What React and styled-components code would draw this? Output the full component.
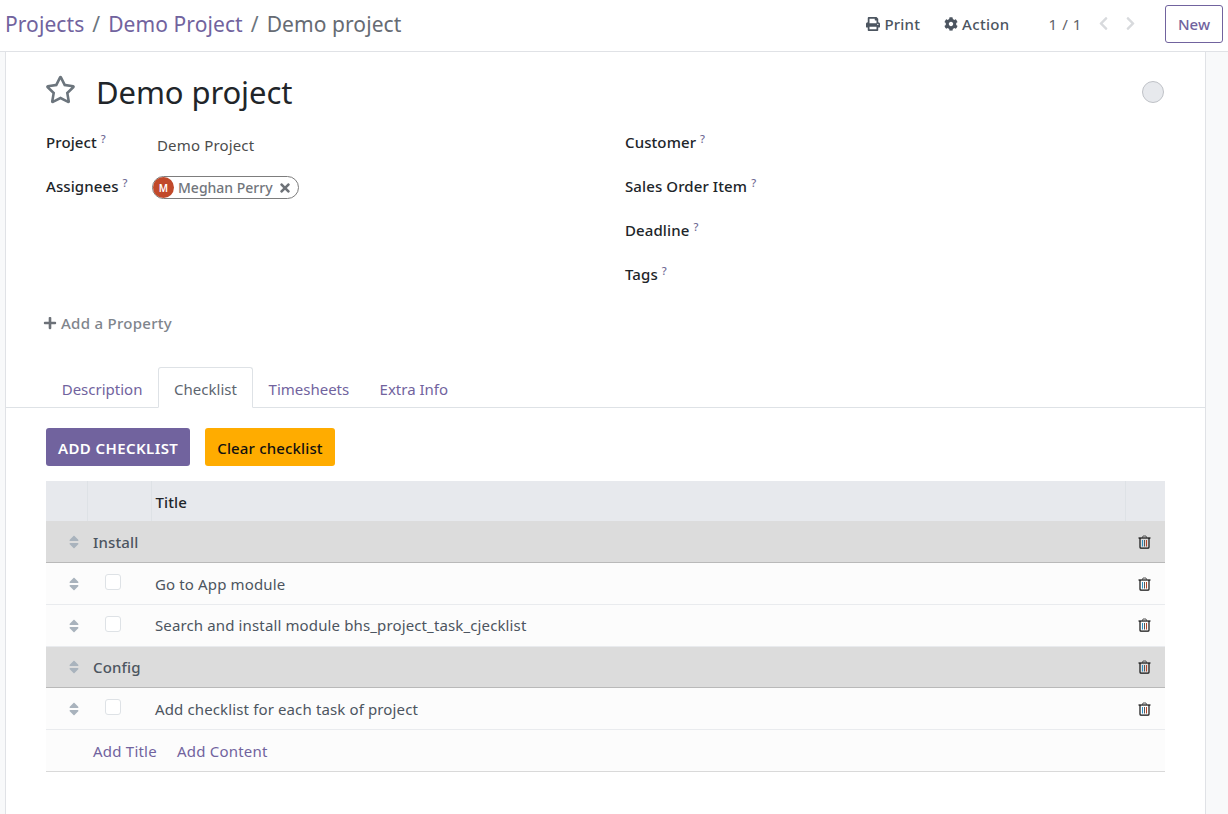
import React from 'react';
import styled, { createGlobalStyle } from 'styled-components';
import { FaPrint, FaCog, FaChevronLeft, FaChevronRight, FaRegStar, FaTimes, FaPlus, FaSort } from 'react-icons/fa';

const GlobalStyle = createGlobalStyle`
  html, body { margin: 0; padding: 0; height: 100%; overflow: hidden; }
  body {
    background: #fff;
    font-family: "Noto Sans", "Open Sans", sans-serif;
    font-size: 15px;
    color: #4c4c4c;
  }
`;

const Page = styled.div`
  width: 1228px;
  height: 814px;
  display: flex;
  flex-direction: column;
  overflow: hidden;
`;

// Top control panel
const ControlPanel = styled.header`
  height: 52px;
  flex: none;
  display: flex;
  align-items: center;
  justify-content: space-between;
  padding: 0 5px 4px 5px;
  box-sizing: border-box;
  border-bottom: 1px solid #e0e2e6;
`;

const Breadcrumb = styled.nav`
  display: flex;
  gap: 8px;
  font-size: 21px;
  letter-spacing: 0.08px;
  color: #6c757d;
`;

const Crumb = styled.span`
  color: ${(props) => (props.$active ? '#666b73' : '#71639e')};
`;

const Actions = styled.div`
  display: flex;
  align-items: center;
`;

const ActionItem = styled.span`
  display: flex;
  align-items: center;
  gap: 4px;
  font-weight: 500;
  letter-spacing: ${(props) => props.$spacing}px;
  color: #4c5560;
  margin-right: ${(props) => props.$gap}px;
  svg { font-size: 14px; }
`;

const Pager = styled.span`
  color: #5f636a;
  margin-right: 14px;
  letter-spacing: 0.6px;
`;

const Arrow = styled.span`
  display: flex;
  color: #d8dadd;
  font-size: 15px;
  margin-right: ${(props) => props.$gap}px;
`;

const NewButton = styled.button`
  width: 58px;
  height: 38px;
  background: #fff;
  border: 1px solid #71639e;
  border-radius: 3px;
  color: #71639e;
  font: 500 15px "Noto Sans", sans-serif;
`;

// Form sheet
const Gutter = styled.div`
  flex: 1;
  display: flex;
  background: #f8f9fa;
`;

const Sheet = styled.main`
  flex: none;
  width: 1201px;
  margin-left: 5px;
  box-sizing: border-box;
  border-left: 1px solid #e0e2e6;
  border-right: 1px solid #e0e2e6;
`;

const Paper = styled.div`
  width: 100%;
  height: 100%;
  background: #fff;
  padding-top: 20px;
  box-sizing: border-box;
`;

const TitleRow = styled.div`
  display: flex;
  align-items: center;
  padding: 0 40px;
  height: 44px;
  position: relative;
`;

const Star = styled.span`
  display: flex;
  font-size: 31px;
  color: #6c757d;
  width: 51px;
  margin-top: -10px;
  margin-left: -1px;
`;

const Title = styled.h1`
  margin: -4px 0 0;
  font-size: 31px;
  font-weight: 400;
  letter-spacing: -0.1px;
  color: #212529;
`;

const StateDot = styled.span`
  position: absolute;
  right: 41px;
  top: 9px;
  width: 20px;
  height: 20px;
  border-radius: 50%;
  background: #e7e9ed;
  border: 1px solid #bfc2c7;
`;

const FormGrid = styled.div`
  display: grid;
  grid-template-columns: 579px 1fr;
  padding: 16px 40px 0;
  height: 178px;
  box-sizing: border-box;
`;

const FieldColumn = styled.div`
  display: flex;
  flex-direction: column;
`;

const Field = styled.div`
  height: 44px;
  display: flex;
  align-items: flex-start;
`;

const Label = styled.label`
  display: block;
  width: ${(props) => props.$width || 'auto'};
  font-weight: 500;
  letter-spacing: 0.1px;
  color: #212529;
  line-height: 20px;
  flex: none;
`;

const Help = styled.sup`
  font-size: 11px;
  font-weight: 500;
  color: #6f6a94;
  margin-left: 4px;
  line-height: 0;
  position: relative;
  top: 0;
  vertical-align: 5px;
`;

const Value = styled.span`
  color: #4c4c4c;
  line-height: 20px;
  letter-spacing: 0.15px;
  margin-top: 3px;
`;

const Chip = styled.span`
  display: inline-flex;
  align-items: center;
  height: 23px;
  box-sizing: border-box;
  margin-left: -5px;
  border: 1px solid #7d7d7d;
  border-radius: 12px;
  padding-right: 6px;
  font-size: 14px;
  font-weight: 500;
  color: #72767c;
`;

const Avatar = styled.span`
  width: 21px;
  height: 21px;
  border-radius: 50%;
  background: #c1492a;
  color: #fff;
  font-size: 10px;
  font-weight: 600;
  display: flex;
  align-items: center;
  justify-content: center;
  margin: 0 4px 0 0;
`;

const ChipClose = styled.span`
  display: flex;
  font-size: 14px;
  margin-left: 5px;
  color: #6e7278;
`;

const AddProperty = styled.div`
  display: flex;
  align-items: center;
  gap: 4px;
  padding-left: 37px;
  height: 24px;
  font-weight: 500;
  letter-spacing: 0.28px;
  color: #7f858c;
  margin-top: 17px;
  svg { font-size: 14px; color: #6c7178; }
`;

const Tabs = styled.ul`
  display: flex;
  list-style: none;
  margin: 32px 0 0;
  padding: 0 0 0 40.5px;
  height: 41px;
  box-sizing: border-box;
  border-bottom: 1px solid #dee2e6;
`;

const Tab = styled.li`
  height: 41px;
  box-sizing: border-box;
  padding: 3px ${(props) => (props.$active ? 15.5 : 14.2)}px 0;
  display: flex;
  align-items: center;
  color: ${(props) => (props.$active ? '#5d6670' : '#71639e')};
  background: ${(props) => (props.$active ? '#fff' : 'transparent')};
  border: 1px solid ${(props) => (props.$active ? '#dee2e6' : 'transparent')};
  border-bottom-color: ${(props) => (props.$active ? '#fff' : 'transparent')};
  border-radius: 3px 3px 0 0;
`;

const ButtonRow = styled.div`
  display: flex;
  gap: 15px;
  padding: 20px 40px 15px;
`;

const ActionButton = styled.button`
  height: 38px;
  padding: 2px 12px 0;
  border: none;
  border-radius: 3px;
  background: ${(props) => props.$bg};
  color: ${(props) => props.$fg};
  letter-spacing: ${(props) => props.$spacing}px;
  font: ${(props) => props.$weight} 15px "Noto Sans", sans-serif;
`;

const TableWrap = styled.div`
  padding: 0 40px;
`;

const Table = styled.table`
  width: 1119px;
  table-layout: fixed;
  border-collapse: collapse;
  font-size: 15px;
  letter-spacing: 0.13px;
  tbody tr:last-child { border-bottom-color: #d9d9d9; }
`;

const HeadCell = styled.th`
  height: 40px;
  padding: 2px 0 0 4px;
  background: #e7e9ed;
  color: #212529;
  font-weight: 500;
  text-align: left;
  box-sizing: border-box;
  border-left: 1px solid #dee2e6;
  &:first-child { border-left: none; }
`;

const Row = styled.tr`
  height: ${(props) => props.$height || 42}px;
  background: ${(props) => (props.$section ? '#dcdcdc' : '#fcfcfc')};
  border-bottom: 1px solid ${(props) => (props.$section ? '#b9b9b9' : '#e9ebee')};
`;

const Cell = styled.td`
  padding: ${(props) => props.$top || 0}px 0 0 ${(props) => (props.$bold ? 6 : 4)}px;
  color: #4c5560;
  font-weight: ${(props) => (props.$bold ? 500 : 400)};
`;

const HandleCell = styled.td`
  padding: 0 5px 2px 0;
  text-align: right;
  svg { display: inline-block; vertical-align: middle; font-size: 16px; color: #a9b3bd; }
`;

const Check = styled.span`
  display: block;
  width: 16px;
  height: 16px;
  box-sizing: border-box;
  margin: -2px 0 0 14px;
  background: #fff;
  border: 1px solid #dee2e6;
  border-radius: 3px;
`;

const TrashCell = styled.td`
  text-align: center;
  padding: 0 2px ${(props) => props.$bottom}px 0;
  svg { display: inline-block; vertical-align: middle; }
`;

const AddLinks = styled.td`
  padding: 2px 0 0 47px;
  letter-spacing: 0.22px;
  color: #71639e;
`;

const AddLink = styled.span`
  margin-right: 20px;
`;

const Trash = () => (
  <svg width="13" height="14" viewBox="0 0 13 14" fill="none">
    <path d="M4.5 2.5 L5 1 H8 L8.5 2.5" stroke="#555" strokeWidth="1" />
    <path d="M0.5 3 H12.5" stroke="#111" strokeWidth="1.2" />
    <path d="M2 3 V12.3 Q2 13.2 3 13.2 H10 Q11 13.2 11 12.3 V3" stroke="#111" strokeWidth="1.2" />
    <path d="M4.5 5 V11.5" stroke="#2f8fc4" strokeWidth="1" />
    <path d="M6.5 5 V11.5" stroke="#555" strokeWidth="1" />
    <path d="M8.5 5 V11.5" stroke="#b5472c" strokeWidth="1" />
  </svg>
);

const rows = [
  { section: true, title: 'Install', height: 41, top: 2, trash: 2 },
  { title: 'Go to App module', height: 42, top: 2, trash: 2 },
  { title: 'Search and install module bhs_project_task_cjecklist', height: 42, top: 0, trash: 4 },
  { section: true, title: 'Config', height: 41, top: 0, trash: 2 },
  { title: 'Add checklist for each task of project', height: 42, top: 2, trash: 2 },
];

const App = () => (
  <Page>
    <GlobalStyle />
    <ControlPanel>
      <Breadcrumb>
        <Crumb>Projects</Crumb>
        <span>/</span>
        <Crumb>Demo Project</Crumb>
        <span>/</span>
        <Crumb $active>Demo project</Crumb>
      </Breadcrumb>
      <Actions>
        <ActionItem $gap={24} $spacing={0.2}><FaPrint />Print</ActionItem>
        <ActionItem $gap={39} $spacing={0.3}><FaCog />Action</ActionItem>
        <Pager>1 / 1</Pager>
        <Arrow $gap={12}><FaChevronLeft /></Arrow>
        <Arrow $gap={27}><FaChevronRight /></Arrow>
        <NewButton>New</NewButton>
      </Actions>
    </ControlPanel>
    <Gutter>
      <Sheet>
        <Paper>
          <TitleRow>
            <Star><FaRegStar /></Star>
            <Title>Demo project</Title>
            <StateDot />
          </TitleRow>
          <FormGrid>
            <FieldColumn>
              <Field>
                <Label $width="111px">Project<Help>?</Help></Label>
                <Value>Demo Project</Value>
              </Field>
              <Field>
                <Label $width="111px">Assignees<Help>?</Help></Label>
                <Chip>
                  <Avatar>M</Avatar>
                  Meghan Perry
                  <ChipClose><FaTimes /></ChipClose>
                </Chip>
              </Field>
            </FieldColumn>
            <FieldColumn>
              <Field><Label>Customer<Help>?</Help></Label></Field>
              <Field><Label>Sales Order Item<Help>?</Help></Label></Field>
              <Field><Label>Deadline<Help>?</Help></Label></Field>
              <Field><Label>Tags<Help>?</Help></Label></Field>
            </FieldColumn>
          </FormGrid>
          <AddProperty><FaPlus />Add a Property</AddProperty>
          <Tabs>
            <Tab>Description</Tab>
            <Tab $active>Checklist</Tab>
            <Tab>Timesheets</Tab>
            <Tab>Extra Info</Tab>
          </Tabs>
          <ButtonRow>
            <ActionButton $bg="#71639e" $fg="#fff" $weight={600} $spacing={0.4}>ADD CHECKLIST</ActionButton>
            <ActionButton $bg="#ffac00" $fg="#111" $weight={500} $spacing={0.15}>Clear checklist</ActionButton>
          </ButtonRow>
          <TableWrap>
            <Table>
              <colgroup>
                <col width="41" />
                <col width="64" />
                <col />
                <col width="40" />
              </colgroup>
              <thead>
                <tr>
                  <HeadCell />
                  <HeadCell />
                  <HeadCell>Title</HeadCell>
                  <HeadCell />
                </tr>
              </thead>
              <tbody>
                {rows.map((row) => (
                  <Row key={row.title} $section={row.section} $height={row.height}>
                    <HandleCell><FaSort /></HandleCell>
                    {row.section ? (
                      <Cell colSpan={2} $bold $top={row.top}>{row.title}</Cell>
                    ) : (
                      <>
                        <Cell><Check /></Cell>
                        <Cell $top={row.top}>{row.title}</Cell>
                      </>
                    )}
                    <TrashCell $bottom={row.trash}><Trash /></TrashCell>
                  </Row>
                ))}
                <Row $height={42}>
                  <AddLinks colSpan={4}>
                    <AddLink>Add Title</AddLink>
                    <AddLink>Add Content</AddLink>
                  </AddLinks>
                </Row>
              </tbody>
            </Table>
          </TableWrap>
        </Paper>
      </Sheet>
    </Gutter>
  </Page>
);

export default App;
